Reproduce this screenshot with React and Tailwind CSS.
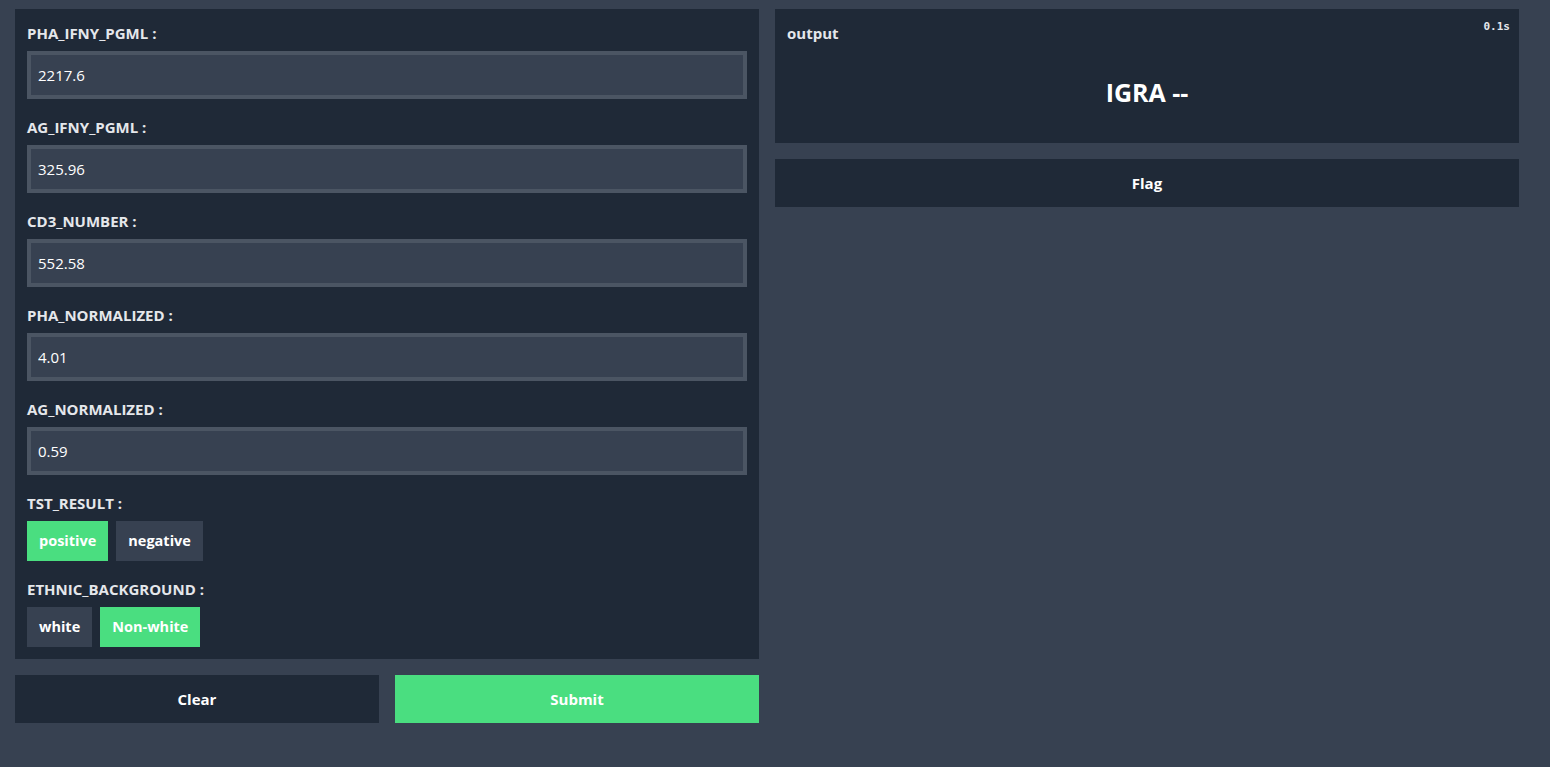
import React, { useState } from 'react';

const fields = [
  { name: 'PHA_IFNY_PGML', value: '2217.6' },
  { name: 'AG_IFNY_PGML', value: '325.96' },
  { name: 'CD3_NUMBER', value: '552.58' },
  { name: 'PHA_NORMALIZED', value: '4.01' },
  { name: 'AG_NORMALIZED', value: '0.59' },
];

const Choice = ({ label, options, selected, onPick }) => (
  <div>
    <div className="text-[15px] leading-5 font-bold text-gray-200 mb-2">{label} :</div>
    <div className="flex gap-2">
      {options.map((o) => (
        <button
          key={o}
          onClick={() => onPick(o)}
          className={`h-10 px-3 text-[14.5px] font-bold text-white ${selected === o ? 'bg-[#4ade80]' : 'bg-[#374151]'}`}
        >
          {o}
        </button>
      ))}
    </div>
  </div>
);

export default function App() {
  const [tst, setTst] = useState('positive');
  const [eth, setEth] = useState('Non-white');

  return (
    <div className="min-h-[767px] bg-[#374151] pl-[15px] pr-[31px] pt-[9px]" style={{ fontFamily: '"Open Sans", "Noto Sans", sans-serif' }}>
      <div className="flex gap-4">
        {/* left column */}
        <div className="flex-1 flex flex-col gap-4">
          <div className="bg-[#1f2937] px-3 pt-[14px] pb-3 flex flex-col gap-[18px]">
            {fields.map((f) => (
              <div key={f.name}>
                <div className="text-[15px] leading-5 font-bold text-gray-200 mb-2">{f.name} :</div>
                <input
                  defaultValue={f.value}
                  className="w-full h-12 bg-[#374151] border-4 border-[#4b5563] px-[7px] text-[15px] text-white outline-none"
                />
              </div>
            ))}
            <Choice label="TST_RESULT" options={['positive', 'negative']} selected={tst} onPick={setTst} />
            <Choice label="ETHNIC_BACKGROUND" options={['white', 'Non-white']} selected={eth} onPick={setEth} />
          </div>
          <div className="flex gap-4">
            <button className="flex-1 h-12 bg-[#1f2937] text-white text-[15px] font-bold">Clear</button>
            <button className="flex-1 h-12 bg-[#4ade80] text-white text-[15px] font-bold">Submit</button>
          </div>
        </div>

        {/* right column */}
        <div className="flex-1 flex flex-col gap-4">
          <div className="relative bg-[#1f2937] h-[134px] px-3 pt-[14px]">
            <span className="absolute top-[10px] right-[9px] text-[11px] font-bold text-gray-200" style={{ fontFamily: '"DejaVu Sans Mono", monospace' }}>0.1s</span>
            <div className="text-[15px] leading-5 font-bold text-gray-200">output</div>
            <div className="text-center text-[25px] leading-8 font-bold text-white mt-[33px]">IGRA --</div>
          </div>
          <button className="h-12 bg-[#1f2937] text-white text-[15px] font-bold">Flag</button>
        </div>
      </div>
    </div>
  );
}
